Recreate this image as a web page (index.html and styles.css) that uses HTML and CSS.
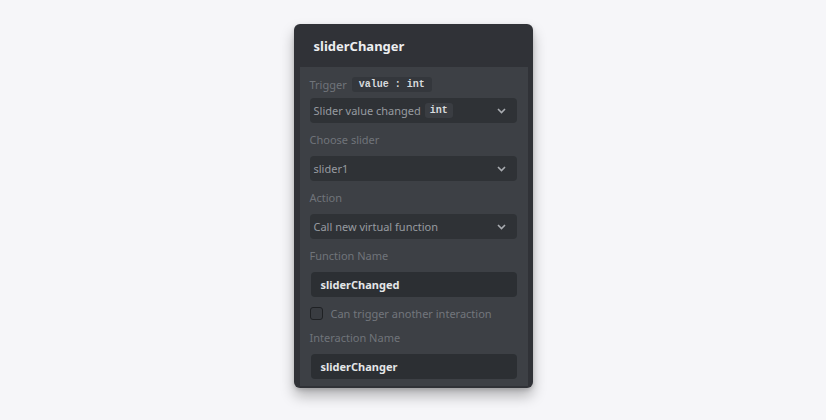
FILE: index.html
```html
<!DOCTYPE html>
<html>
<head>
<meta charset="utf-8">
<link rel="stylesheet" href="styles.css">
</head>
<body>
<div class="card">
  <div class="header">sliderChanger</div>
  <div class="panel">
    <div class="trigger-row">
      <span class="label">Trigger</span>
      <span class="chip">value : int</span>
    </div>
    <div class="select s1">
      <span class="select-text">Slider value changed <span class="chip small">int</span></span>
      <svg class="chev" width="9" height="6" viewBox="0 0 9 6"><path d="M1 1 L4.5 4.5 L8 1" fill="none" stroke="#a9acb1" stroke-width="1.6"/></svg>
    </div>
    <div class="label l">Choose slider</div>
    <div class="select">
      <span class="select-text">slider1</span>
      <svg class="chev" width="9" height="6" viewBox="0 0 9 6"><path d="M1 1 L4.5 4.5 L8 1" fill="none" stroke="#a9acb1" stroke-width="1.6"/></svg>
    </div>
    <div class="label l">Action</div>
    <div class="select">
      <span class="select-text">Call new virtual function</span>
      <svg class="chev" width="9" height="6" viewBox="0 0 9 6"><path d="M1 1 L4.5 4.5 L8 1" fill="none" stroke="#a9acb1" stroke-width="1.6"/></svg>
    </div>
    <div class="label l">Function Name</div>
    <div class="input">sliderChanged</div>
    <div class="check-row">
      <span class="box"></span>
      <span class="check-text">Can trigger another interaction</span>
    </div>
    <div class="label l2">Interaction Name</div>
    <div class="input">sliderChanger</div>
  </div>
</div>
</body>
</html>
```

FILE: styles.css
```css
html, body {
  margin: 0;
  padding: 0;
}
body {
  background: #f6f6f9;
  width: 826px;
  height: 420px;
  font-family: "Noto Sans", "Open Sans", sans-serif;
  display: flex;
  justify-content: center;
  align-items: flex-start;
  padding-top: 24px;
  box-sizing: border-box;
}
.card {
  width: 239px;
  height: 364px;
  background: #303237;
  border-radius: 6px;
  box-shadow: 0 8px 14px rgba(0, 0, 0, 0.28), 0 2px 4px rgba(0, 0, 0, 0.15);
  display: flex;
  flex-direction: column;
  box-sizing: border-box;
  padding: 0 5px 2px 6px;
}
.header {
  height: 43px;
  display: flex;
  align-items: center;
  padding-left: 14px;
  color: #eceef0;
  font-weight: 700;
  font-size: 13px;
  flex-shrink: 0;
}
.panel {
  flex: 1;
  background: #3d4045;
  padding: 10px 11px 0 10px;
  box-sizing: border-box;
  display: flex;
  flex-direction: column;
}
.label {
  color: #70747a;
  font-size: 11px;
  line-height: 15px;
  height: 15px;
}
.l { margin-top: 9px; margin-bottom: 9px; }
.l2 { margin-top: 10px; margin-bottom: 9px; }
.trigger-row {
  display: flex;
  align-items: center;
  height: 15px;
  gap: 5px;
}
.chip {
  background: #34373c;
  color: #d8dadd;
  font-family: "Liberation Mono", "DejaVu Sans Mono", monospace;
  font-weight: 700;
  font-size: 10px;
  line-height: 15px;
  height: 15px;
  padding: 0 7px;
  border-radius: 3px;
  display: inline-block;
}
.chip.small {
  background: #3a3d42;
  padding: 0 5px;
  margin-left: 4px;
}
.select {
  height: 25px;
  background: #2f3236;
  border-radius: 4px;
  display: flex;
  align-items: center;
  justify-content: space-between;
  padding: 0 11px 0 4px;
  box-sizing: border-box;
}
.s1 { margin-top: 6px; }
.select-text {
  color: #979ba0;
  font-size: 11px;
  display: flex;
  align-items: center;
}
.chev { display: block; }
.input {
  height: 25px;
  background: #2c2f33;
  border-radius: 4px;
  margin-left: 1px;
  padding-left: 10px;
  display: flex;
  align-items: center;
  color: #e4e6e8;
  font-weight: 700;
  font-size: 11px;
}
.check-row {
  display: flex;
  align-items: center;
  margin-top: 9px;
  height: 14px;
}
.box {
  width: 11px;
  height: 11px;
  border: 1.5px solid #1f2124;
  border-radius: 3px;
  background: #393c41;
  margin-right: 8px;
}
.check-text {
  color: #72767c;
  font-size: 11px;
}
```
